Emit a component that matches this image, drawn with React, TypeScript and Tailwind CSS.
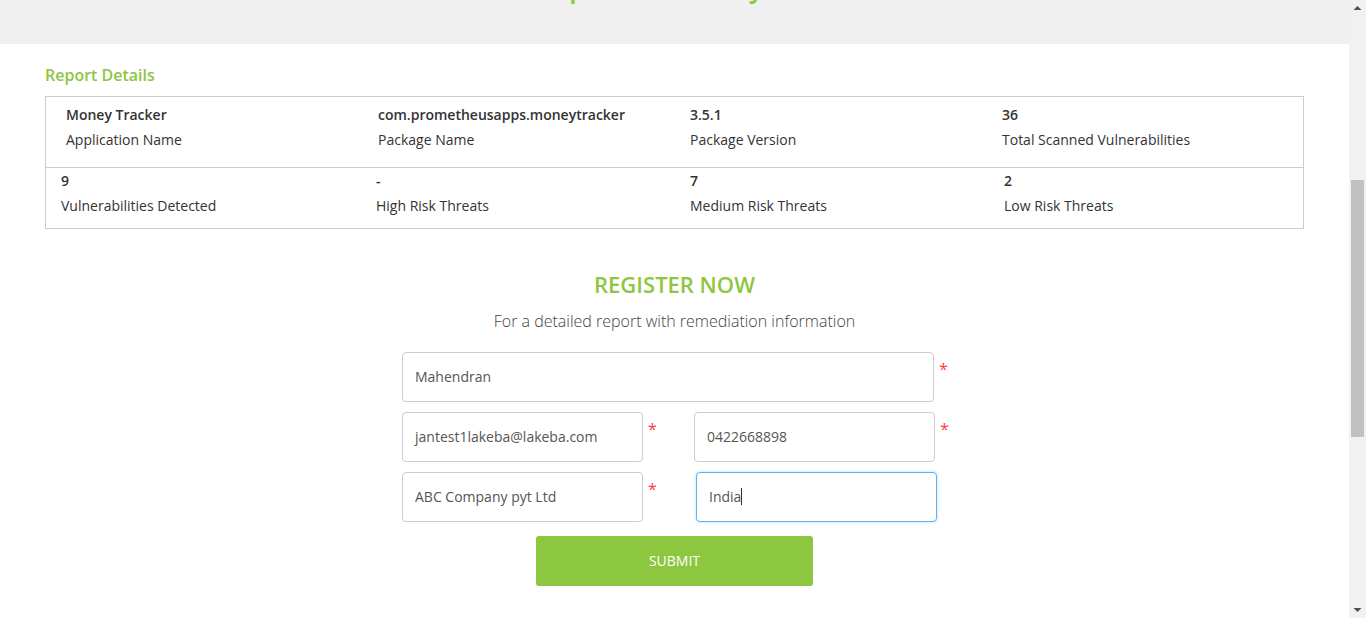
import React from 'react';

interface Detail {
  value: string;
  label: string;
}

const topRow: Detail[] = [
  { value: 'Money Tracker', label: 'Application Name' },
  { value: 'com.prometheusapps.moneytracker', label: 'Package Name' },
  { value: '3.5.1', label: 'Package Version' },
  { value: '36', label: 'Total Scanned Vulnerabilities' },
];

const bottomRow: Detail[] = [
  { value: '9', label: 'Vulnerabilities Detected' },
  { value: '-', label: 'High Risk Threats' },
  { value: '7', label: 'Medium Risk Threats' },
  { value: '2', label: 'Low Risk Threats' },
];

function Star() {
  return <span className="shrink-0 text-[#ff3b3b] text-[16px] leading-none pt-[9px] pl-[5px]">*</span>;
}

function Field({ value, width, focused }: { value: string; width: string; focused?: boolean }) {
  return (
    <div
      className={`${width} shrink-0 h-[50px] rounded-[4px] bg-white flex items-center px-[12px] pb-[1px] text-[14px] text-[#555] border ${
        focused ? 'border-[#66afe9] shadow-[0_0_3px_rgba(102,175,233,0.5)]' : 'border-[#ccc]'
      }`}
    >
      {value}
      {focused && <span className="w-px h-[17px] bg-[#333]" />}
    </div>
  );
}

export default function App() {
  return (
    <div className="flex h-[618px] overflow-hidden bg-white font-['Open_Sans',sans-serif]">
      <div className="flex-1">
        {/* Top band, heading scrolled out of view */}
        <div className="h-[44px] bg-[#f0f0f0] overflow-hidden">
          <h2 className="-mt-[34px] pr-[50px] text-center text-[28px] leading-[40px] font-semibold text-[#8dc63f]">
            Report Summary
          </h2>
        </div>

        <div className="px-[45px]">
          <h3 className="mt-[20px] text-[16px] leading-[22px] font-semibold text-[#8dc63f]">Report Details</h3>

          <div className="mt-[10px] w-[1259px] border border-[#ccc]">
            <div className="grid grid-cols-[312px_312px_312px_1fr] h-[71px] pl-[20px] pt-[7px] border-b border-[#ccc]">
              {topRow.map((d) => (
                <div key={d.label} className="text-[14px] text-[#333]">
                  <div className="font-semibold leading-[22px]">{d.value}</div>
                  <div className="leading-[22px] mt-[3px]">{d.label}</div>
                </div>
              ))}
            </div>
            <div className="grid grid-cols-[315px_314px_314px_1fr] h-[60px] pl-[15px] pt-[2px]">
              {bottomRow.map((d) => (
                <div key={d.label} className="text-[14px] text-[#333]">
                  <div className="font-semibold leading-[22px]">{d.value}</div>
                  <div className="leading-[22px] mt-[3px]">{d.label}</div>
                </div>
              ))}
            </div>
          </div>
        </div>

        <div className="mt-[40px] text-center">
          <h2 className="text-[22px] leading-[30px] font-semibold text-[#8dc63f]">REGISTER NOW</h2>
          <p className="mt-[11px] text-[16px] leading-[22px] font-light text-[#444]">
            For a detailed report with remediation information
          </p>
        </div>

        <div className="mx-auto mt-[20px] w-[545px] flex flex-col gap-[10px]">
          <div className="flex items-start">
            <Field value="Mahendran" width="w-[532px]" />
            <Star />
          </div>
          <div className="flex items-start">
            <div className="w-[292px] shrink-0 flex items-start">
              <Field value="jantest1lakeba@lakeba.com" width="w-[241px]" />
              <Star />
            </div>
            <div className="flex items-start">
              <Field value="0422668898" width="w-[241px]" />
              <Star />
            </div>
          </div>
          <div className="flex items-start">
            <div className="w-[294px] shrink-0 flex items-start">
              <Field value="ABC Company pyt Ltd" width="w-[241px]" />
              <Star />
            </div>
            <Field value="India" width="w-[241px]" focused />
          </div>
          <div className="flex justify-center mt-[4px]">
            <button className="w-[277px] h-[50px] rounded-[3px] bg-[#8dc63f] text-white text-[14px] pb-[1px]">
              SUBMIT
            </button>
          </div>
        </div>
      </div>

      {/* Scrollbar */}
      <div className="w-[17px] bg-[#f1f1f1] flex flex-col items-center">
        <svg width="9" height="14" viewBox="0 0 9 14" className="mt-[1px]">
          <path d="M0.5 9 L4.5 5 L8.5 9 Z" fill="#505050" />
        </svg>
        <div className="mt-[165px] w-[13px] h-[257px] bg-[#c1c1c1]" />
        <div className="flex-1" />
        <svg width="9" height="14" viewBox="0 0 9 14" className="mb-[1px]">
          <path d="M0.5 5 L4.5 9 L8.5 5 Z" fill="#505050" />
        </svg>
      </div>
    </div>
  );
}
